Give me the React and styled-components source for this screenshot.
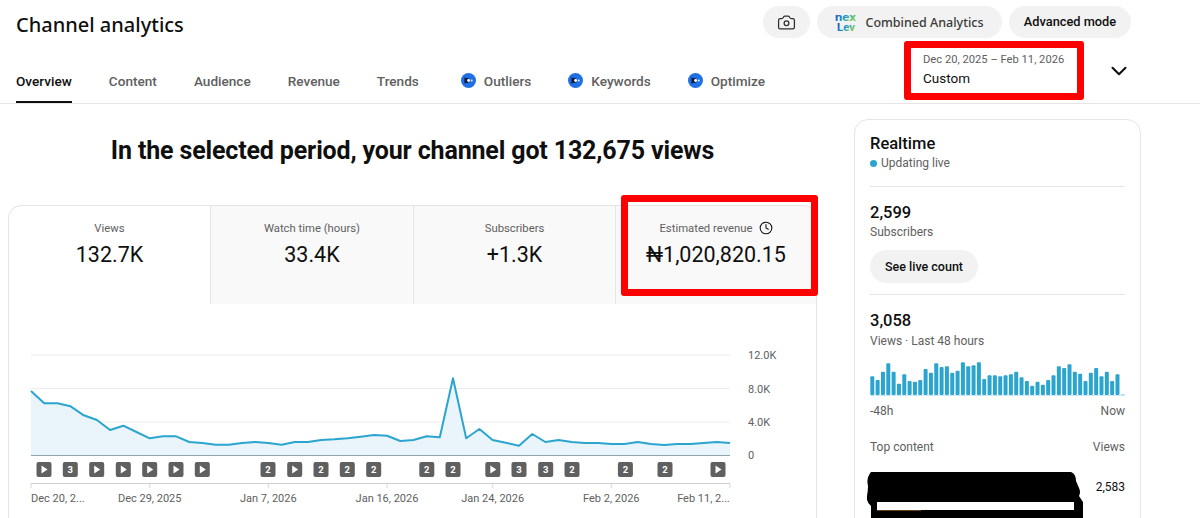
import React from 'react'
import styled, { createGlobalStyle } from 'styled-components'
import { Camera, ChevronDown, Clock } from 'lucide-react'

const GlobalStyle = createGlobalStyle`
  html, body {
    margin: 0;
    padding: 0;
    background: #fff;
    font-family: Roboto, "Liberation Sans", sans-serif;
    color: #0f0f0f;
  }
`

const TABS = [
  { label: 'Overview', active: true },
  { label: 'Content' },
  { label: 'Audience' },
  { label: 'Revenue' },
  { label: 'Trends' },
  { label: 'Outliers', badge: true, lead: 5 },
  { label: 'Keywords', badge: true },
  { label: 'Optimize', badge: true },
]

const METRICS = [
  { label: 'Views', value: '132.7K', active: true },
  { label: 'Watch time (hours)', value: '33.4K' },
  { label: 'Subscribers', value: '+1.3K' },
  { label: 'Estimated revenue', value: '₦1,020,820.15', pending: true },
]

// line values read off the screenshot, in page pixels
const LINE = [
  391, 403.3, 403.3, 406.3, 415.3, 420, 430, 425.7, 432, 438.3, 436.3, 436.3, 442, 443, 444.7, 444.7, 443, 442,
  443, 444.7, 442, 442, 440, 439.3, 438.3, 436.7, 435, 435.7, 441, 440, 436.3, 437.3, 378.3, 438.3, 429, 440,
  442.7, 445.7, 434, 442, 440, 442, 443, 443, 444, 444, 442, 444, 445, 444, 444, 443, 442, 443,
]
const stepX = (730 - 31) / 53
const linePoints = LINE.map((y, i) => `${(31 + i * stepX).toFixed(1)},${y}`).join(' ')

const GRID_Y = [355, 388.5, 422, 455]
const Y_LABELS = ['12.0K', '8.0K', '4.0K', '0']
const X_TICKS = [31, 149.7, 268.3, 387, 492.7, 611.3, 730]
const X_LABELS = [
  { x: 31, anchor: 'start', text: 'Dec 20, 2...' },
  { x: 149.7, anchor: 'middle', text: 'Dec 29, 2025' },
  { x: 268.3, anchor: 'middle', text: 'Jan 7, 2026' },
  { x: 387, anchor: 'middle', text: 'Jan 16, 2026' },
  { x: 492.7, anchor: 'middle', text: 'Jan 24, 2026' },
  { x: 611.3, anchor: 'middle', text: 'Feb 2, 2026' },
  { x: 730, anchor: 'end', text: 'Feb 11, 2...' },
]
const MARKERS = [
  [44, 0], [70.3, 3], [96.7, 0], [123.3, 0], [149.7, 0], [176, 0], [202.3, 0],
  [268, 2], [294.7, 0], [321, 2], [347.3, 2], [373.7, 2], [426.8, 2], [453, 2],
  [492.8, 0], [519, 3], [545.7, 3], [572, 2], [625.4, 2], [665, 2], [718, 0],
]

const BAR_TOPS = [
  200, 211, 186, 161, 186, 222, 194, 214, 216, 211, 178, 189, 161, 172, 170, 189, 183, 158, 170, 167, 158, 208, 197, 197,
  200, 197, 194, 186, 203, 214, 228, 216, 225, 211, 197, 170, 175, 164, 186, 192, 214, 189, 175, 200, 186, 214, 194, 253,
]

const Page = styled.div`
  width: 1200px;
  height: 518px;
  overflow: hidden;
`

const Header = styled.header`
  height: 103px;
  border-bottom: 1px solid #e5e5e5;
`

const TopRow = styled.div`
  display: flex;
  justify-content: space-between;
  align-items: flex-start;
  height: 38px;
  padding: 6px 69px 0 16px;
  box-sizing: border-box;
`

const Title = styled.h1`
  margin: 0;
  font-family: "Noto Sans", sans-serif;
  font-size: 20px;
  font-weight: 500;
  line-height: 38px;
`

const Actions = styled.div`
  display: flex;
  gap: 7px;
`

const Pill = styled.button`
  display: flex;
  align-items: center;
  justify-content: center;
  gap: 8px;
  height: 32px;
  width: ${(p) => p.$width}px;
  padding: 0 0 ${(p) => p.$lift || 0}px;
  border: 0;
  border-radius: 16px;
  background: #f2f2f2;
  color: ${(p) => p.$color || '#0f0f0f'};
  font-family: ${(p) => p.$font || 'Roboto, sans-serif'};
  font-size: ${(p) => p.$size || 13}px;
  font-weight: 500;
`

const NavRow = styled.div`
  display: flex;
  justify-content: space-between;
  height: 65px;
  padding: 0 68px 0 16px;
  box-sizing: border-box;
`

const TabList = styled.nav`
  display: flex;
  gap: 37px;
`

const Tab = styled.div`
  display: flex;
  align-items: center;
  gap: 8px;
  margin-left: ${(p) => p.$lead || 0}px;
  padding-top: 22px;
  box-sizing: border-box;
  color: ${(p) => (p.$active ? '#0f0f0f' : '#606060')};
  font-size: 13.6px;
  font-weight: 500;
  border-bottom: 2px solid ${(p) => (p.$active ? '#0f0f0f' : 'transparent')};
`

const DateArea = styled.div`
  display: flex;
  align-items: center;
  gap: 22px;
`

const RedBox = styled.div`
  border: 7px solid #ff0000;
  border-radius: 3px;
`

const DateBox = styled(RedBox)`
  width: 180px;
  height: 59px;
  margin-top: -1px;
  padding: 4px 12px 0;
  box-sizing: border-box;
`

const DateRange = styled.div`
  font-size: 11.2px;
  line-height: 16px;
  color: #606060;
  white-space: nowrap;
`

const DateName = styled.div`
  margin-top: 1px;
  font-size: 13.5px;
  line-height: 18px;
`

const Main = styled.main`
  display: flex;
  align-items: flex-start;
  gap: 37px;
  padding-left: 8px;
`

const LeftColumn = styled.section`
  width: 809px;
  flex: none;
`

const Heading = styled.h2`
  margin: 0;
  padding: 29px 0 36px;
  font-size: 25px;
  line-height: 36px;
  font-weight: 700;
  text-align: center;
  letter-spacing: -0.15px;
`

const Card = styled.div`
  border: 1px solid #e5e5e5;
  border-bottom: 0;
  border-radius: 14px 14px 0 0;
  height: 320px;
  box-sizing: border-box;
`

const MetricRow = styled.div`
  display: grid;
  grid-template-columns: 201px 203px 202px 1fr;
  height: 98px;
`

const Metric = styled.div`
  position: relative;
  padding-top: 14px;
  box-sizing: border-box;
  text-align: center;
  background: ${(p) => (p.$active ? '#fff' : '#f9f9f9')};
  border-left: ${(p) => (p.$active ? '0' : '1px solid #e5e5e5')};
  border-radius: ${(p) => (p.$active ? '14px 0 0 0' : '0')};
  &:last-child {
    border-top-right-radius: 14px;
  }
`

const MetricLabel = styled.div`
  display: flex;
  align-items: center;
  justify-content: center;
  gap: 6px;
  height: 16px;
  font-size: 11.3px;
  color: #606060;
`

const MetricValue = styled.div`
  margin-top: 4px;
  font-size: 21.5px;
  line-height: 30px;
`

const RevenueFrame = styled(RedBox)`
  position: absolute;
  top: -11px;
  left: 5px;
  right: -2px;
  height: 101px;
  box-sizing: border-box;
`

const Chart = styled.svg`
  display: block;
`

const AxisText = styled.text`
  font-family: Roboto, sans-serif;
  font-size: 11px;
  fill: #606060;
`

const MarkerText = styled.text`
  font-family: Roboto, sans-serif;
  font-size: 9.5px;
  font-weight: 700;
  fill: #fff;
`

const Realtime = styled.aside`
  width: 287px;
  height: 420px;
  flex: none;
  margin-top: 15px;
  padding: 0 15px;
  box-sizing: border-box;
  border: 1px solid #e5e5e5;
  border-radius: 14px;
`

const Block = styled.div`
  height: ${(p) => p.$height}px;
  padding-top: ${(p) => p.$top}px;
  box-sizing: border-box;
  border-bottom: ${(p) => (p.$divider ? '1px solid #e5e5e5' : '0')};
`

const RealtimeTitle = styled.div`
  font-size: 16.5px;
  line-height: 22px;
  font-weight: 500;
`

const Muted = styled.div`
  font-size: 12px;
  line-height: 16px;
  color: #606060;
`

const LiveRow = styled(Muted)`
  display: flex;
  align-items: center;
  gap: 4px;
`

const LiveDot = styled.span`
  width: 7px;
  height: 7px;
  border-radius: 50%;
  background: #2ba5d0;
`

const BigNumber = styled.div`
  font-size: 16.5px;
  line-height: 22px;
  font-weight: 500;
  margin-bottom: ${(p) => p.$gap || 0}px;
`

const LiveButton = styled.button`
  display: block;
  width: 108px;
  height: 33px;
  margin-top: 10px;
  padding: 0;
  border: 0;
  border-radius: 17px;
  background: #f2f2f2;
  color: #0f0f0f;
  font-family: Roboto, sans-serif;
  font-size: 12.5px;
  font-weight: 500;
`

const SpreadRow = styled(Muted)`
  display: flex;
  justify-content: space-between;
  margin-top: ${(p) => p.$top || 0}px;
`

const ContentRow = styled.div`
  display: flex;
  justify-content: space-between;
  margin-top: 17px;
  margin-left: -3px;
`

const ContentViews = styled.div`
  font-size: 12px;
  line-height: 16px;
  margin-top: 7px;
`

const NexLogo = () => (
  <svg width="22" height="24" viewBox="0 0 22 24">
    <defs>
      <linearGradient id="nexFill" x1="0" y1="0" x2="1" y2="0.6">
        <stop offset="0" stopColor="#27309c" />
        <stop offset="0.5" stopColor="#1593d8" />
        <stop offset="1" stopColor="#8bd63f" />
      </linearGradient>
    </defs>
    <text x="0" y="11" fontFamily="Roboto, sans-serif" fontSize="11" fontWeight="700" fill="url(#nexFill)" textLength="21" lengthAdjust="spacingAndGlyphs">nex</text>
    <text x="2" y="21" fontFamily="Roboto, sans-serif" fontSize="11" fontWeight="700" fill="url(#nexFill)" textLength="18" lengthAdjust="spacingAndGlyphs">Lev</text>
  </svg>
)

const BadgeIcon = () => (
  <svg width="15" height="15" viewBox="0 0 15 15">
    <circle cx="7.5" cy="7.5" r="7.5" fill="#1f6fe5" />
    <path d="M3.4 4.6 L8.2 5.6 V9.4 L3.4 10.4 Z" fill="#0f1f3d" />
    <circle cx="7.6" cy="7.5" r="1.4" fill="#fff" />
    <circle cx="10.7" cy="7.5" r="1" fill="#dfe9fb" />
  </svg>
)

const TrendChart = () => (
  <Chart width="808" height="214" viewBox="9 304 808 214">
    {GRID_Y.slice(0, 3).map((y) => (
      <line key={y} x1="31" x2="730" y1={y} y2={y} stroke="#ececec" strokeWidth="1" />
    ))}
    <polygon points={`31,455 ${linePoints} 730,455`} fill="#e9f5fa" />
    <line x1="31" x2="730" y1="455.5" y2="455.5" stroke="#90a4ae" strokeWidth="1" />
    <polyline points={linePoints} fill="none" stroke="#2ba5d0" strokeWidth="2" strokeLinejoin="round" />
    {Y_LABELS.map((text, i) => (
      <AxisText key={text} x="748" y={GRID_Y[i] + 4}>{text}</AxisText>
    ))}
    {MARKERS.map(([x, n]) => (
      <g key={x}>
        <rect x={x - 7.5} y="462" width="15" height="15" rx="2" fill="#606060" />
        {n ? (
          <MarkerText x={x} y="473" textAnchor="middle">{n}</MarkerText>
        ) : (
          <path d={`M${x - 2.5} 465.5 L${x + 3.5} 469.5 L${x - 2.5} 473.5 Z`} fill="#fff" />
        )}
      </g>
    ))}
    <line x1="31" x2="730" y1="483.5" y2="483.5" stroke="#cfcfcf" strokeWidth="1.2" />
    {X_TICKS.map((x) => (
      <line key={x} x1={x} x2={x} y1="484" y2="488" stroke="#d8d8d8" strokeWidth="1" />
    ))}
    {X_LABELS.map((l) => (
      <AxisText key={l.text} x={l.x} y="502" textAnchor={l.anchor}>{l.text}</AxisText>
    ))}
  </Chart>
)

const LiveBars = () => (
  <svg width="255" height="34" viewBox="0 0 255 34" style={{ display: 'block', marginTop: 13 }}>
    {BAR_TOPS.map((top, i) => {
      const h = (256 - top) / 3
      return (
        <rect
          key={i}
          x={i * 5.33 + 0.3}
          y={33 - h}
          width="4"
          height={h}
          rx="1"
          fill={i === 47 ? '#a9d9ea' : '#2ba5d0'}
        />
      )
    })}
    <line x1="0" x2="255" y1="33.5" y2="33.5" stroke="#cfe7f1" strokeWidth="1" />
  </svg>
)

const Redaction = () => (
  <svg width="216" height="46" viewBox="0 0 216 46">
    <path
      d="M4 0 H204 Q209 2 209 9 L212 16 Q214 20 212 24 L216 30 V46 H4 V34 Q-1 30 0 24 Q1 18 1 14 Q-1 6 4 0 Z"
      fill="#000"
    />
    <rect x="10" y="30" width="197" height="8" fill="#fff" />
    <rect x="10" y="38" width="44" height="1" fill="#c9822a" opacity="0.5" />
  </svg>
)

export default function App() {
  return (
    <Page>
      <GlobalStyle />
      <Header>
        <TopRow>
          <Title>Channel analytics</Title>
          <Actions>
            <Pill $width={47} aria-label="Snapshot">
              <Camera size={19} strokeWidth={1.6} color="#303030" />
            </Pill>
            <Pill $width={185} $size={12.5} $color="#3a3a3a" $font='"Noto Sans", sans-serif'>
              <NexLogo />
              Combined Analytics
            </Pill>
            <Pill $width={122} $size={12.8} $lift={2}>Advanced mode</Pill>
          </Actions>
        </TopRow>
        <NavRow>
          <TabList>
            {TABS.map((tab) => (
              <Tab key={tab.label} $active={tab.active} $lead={tab.lead}>
                {tab.badge && <BadgeIcon />}
                {tab.label}
              </Tab>
            ))}
          </TabList>
          <DateArea>
            <DateBox>
              <DateRange>Dec 20, 2025 – Feb 11, 2026</DateRange>
              <DateName>Custom</DateName>
            </DateBox>
            <ChevronDown size={26} strokeWidth={1.9} color="#0f0f0f" />
          </DateArea>
        </NavRow>
      </Header>
      <Main>
        <LeftColumn>
          <Heading>In the selected period, your channel got 132,675 views</Heading>
          <Card>
            <MetricRow>
              {METRICS.map((m) => (
                <Metric key={m.label} $active={m.active}>
                  <MetricLabel>
                    {m.label}
                    {m.pending && <Clock size={14} strokeWidth={1.8} color="#0f0f0f" />}
                  </MetricLabel>
                  <MetricValue>{m.value}</MetricValue>
                  {m.pending && <RevenueFrame />}
                </Metric>
              ))}
            </MetricRow>
            <TrendChart />
          </Card>
        </LeftColumn>
        <Realtime>
          <Block $height={67} $top={13} $divider>
            <RealtimeTitle>Realtime</RealtimeTitle>
            <LiveRow>
              <LiveDot />
              Updating live
            </LiveRow>
          </Block>
          <Block $height={108} $top={15} $divider>
            <BigNumber>2,599</BigNumber>
            <Muted>Subscribers</Muted>
            <LiveButton>See live count</LiveButton>
          </Block>
          <Block $height={230} $top={15}>
            <BigNumber $gap={1}>3,058</BigNumber>
            <Muted>Views · Last 48 hours</Muted>
            <LiveBars />
            <SpreadRow $top={7}>
              <span>-48h</span>
              <span>Now</span>
            </SpreadRow>
            <SpreadRow $top={20}>
              <span>Top content</span>
              <span>Views</span>
            </SpreadRow>
            <ContentRow>
              <Redaction />
              <ContentViews>2,583</ContentViews>
            </ContentRow>
          </Block>
        </Realtime>
      </Main>
    </Page>
  )
}
